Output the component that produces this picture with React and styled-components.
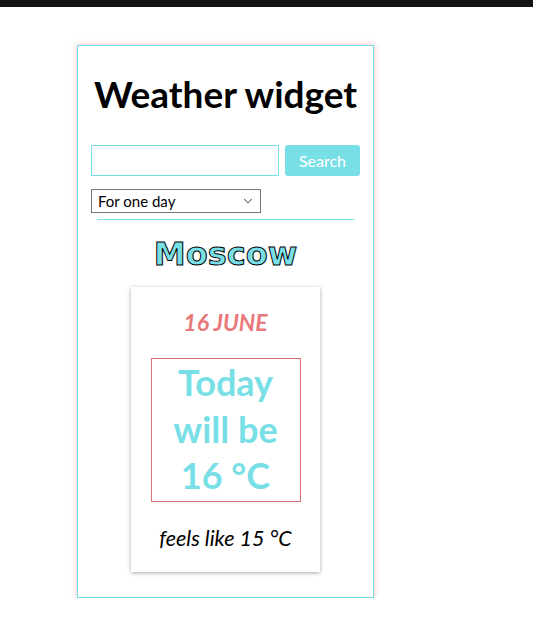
import React from 'react';
import styled, { createGlobalStyle } from 'styled-components';
import { ChevronDown } from 'lucide-react';

const GlobalStyle = createGlobalStyle`
  body {
    margin: 0;
    background: #ffffff;
    font-family: Lato, "Open Sans", sans-serif;
  }
`;

const TopBar = styled.div`
  height: 7px;
  background: #141414;
`;

const Widget = styled.div`
  box-sizing: border-box;
  width: 297px;
  margin: 38px 0 0 77px;
  padding: 0 13px 25px;
  border: 1px solid #6fdde6;
  box-shadow: 0 0 5px 1px rgba(244, 160, 160, 0.5);
  display: flex;
  flex-direction: column;
`;

const Title = styled.h1`
  margin: 26px 0 29px;
  font-size: 37px;
  line-height: 44px;
  font-weight: 700;
  text-align: center;
  color: #000;
`;

const SearchRow = styled.div`
  display: flex;
  gap: 6px;
`;

const SearchInput = styled.input`
  box-sizing: border-box;
  width: 188px;
  height: 31px;
  border: 1px solid #79dfe7;
  outline: none;
  padding: 0 6px;
  font-family: inherit;
  font-size: 15px;
`;

const SearchButton = styled.button`
  width: 75px;
  height: 31px;
  border: none;
  border-radius: 3px;
  background: #79dfe7;
  color: #fff;
  font-family: inherit;
  font-size: 16px;
  cursor: pointer;
`;

const SelectWrap = styled.div`
  position: relative;
  margin-top: 13px;
  width: 170px;
  height: 24px;
`;

const PeriodSelect = styled.select`
  box-sizing: border-box;
  appearance: none;
  width: 100%;
  height: 100%;
  border: 1px solid #767676;
  border-radius: 0;
  background: #fff;
  padding: 0 20px 0 6px;
  font-family: inherit;
  font-size: 15px;
  color: #000;
`;

const Chevron = styled(ChevronDown)`
  position: absolute;
  right: 6px;
  top: 5px;
  width: 14px;
  height: 14px;
  color: #555;
  pointer-events: none;
`;

const Divider = styled.hr`
  margin: 6px 6px 0;
  border: none;
  border-top: 1px solid #79dfe7;
`;

const City = styled.h2`
  margin: 14px 0 13px;
  font-family: "DejaVu Sans", Verdana, sans-serif;
  font-size: 32px;
  line-height: 40px;
  font-weight: 700;
  text-align: center;
  color: #79dfe7;
  -webkit-text-stroke: 1px #000;
`;

const DayCard = styled.div`
  align-self: center;
  box-sizing: border-box;
  width: 189px;
  padding: 22px 0 21px;
  background: #fff;
  box-shadow: 0 1px 4px rgba(0, 0, 0, 0.35);
  display: flex;
  flex-direction: column;
  align-items: center;
`;

const DateLabel = styled.div`
  font-size: 23px;
  line-height: 26px;
  font-weight: 700;
  font-style: italic;
  color: #e8797b;
`;

const TempBox = styled.div`
  box-sizing: border-box;
  width: 150px;
  margin: 23px 0;
  padding: 0 0 2px;
  border: 1px solid #e07174;
  font-size: 36px;
  line-height: 46.5px;
  font-weight: 700;
  text-align: center;
  color: #79dfe7;
`;

const FeelsLike = styled.div`
  font-size: 21.5px;
  line-height: 26px;
  font-style: italic;
  color: #000;
`;

export default function App() {
  return (
    <>
      <GlobalStyle />
      <TopBar />
      <Widget>
        <Title>Weather widget</Title>
        <SearchRow>
          <SearchInput type="text" />
          <SearchButton>Search</SearchButton>
        </SearchRow>
        <SelectWrap>
          <PeriodSelect defaultValue="one">
            <option value="one">For one day</option>
            <option value="week">For a week</option>
          </PeriodSelect>
          <Chevron strokeWidth={1.8} />
        </SelectWrap>
        <Divider />
        <City>Moscow</City>
        <DayCard>
          <DateLabel>16 JUNE</DateLabel>
          <TempBox>Today will be 16 °C</TempBox>
          <FeelsLike>feels like 15 °C</FeelsLike>
        </DayCard>
      </Widget>
    </>
  );
}
